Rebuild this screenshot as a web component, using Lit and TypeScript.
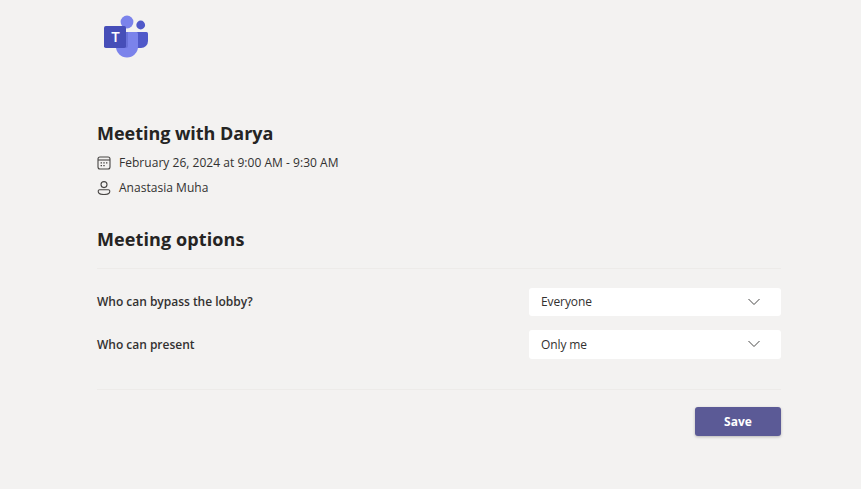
import { LitElement, html, css } from "lit";
import { customElement } from "lit/decorators.js";

const chevron = html`<svg class="chev" width="14" height="8" viewBox="0 0 14 8" fill="none"><path d="M1.5 1 L7 6.5 L12.5 1" stroke="#4a4948" stroke-width="1"/></svg>`;

const teams = html`<svg class="logo" width="46" height="44" viewBox="0 0 46 44">
  <circle cx="38.7" cy="11" r="4.4" fill="#5059c9"/>
  <path d="M30 18h14.5a1.5 1.5 0 0 1 1.5 1.5V27a7 7 0 0 1-7 7H30z" fill="#5059c9"/>
  <circle cx="25" cy="8" r="6.4" fill="#7b83eb"/>
  <path d="M14 18h20.5a1.5 1.5 0 0 1 1.5 1.5V32.500a10.500 10.500 0 0 1-22 0z" fill="#7b83eb"/>
  <path d="M14 18h12v14a2 2 0 0 1-2 2h-9A11 11 0 0 1 14 32.500z" fill="#5a62c9" opacity="0.5"/>
  <rect x="2" y="12" width="22" height="22" rx="1.8" fill="#464eb8"/>
  <text class="t" x="13.400" y="28.200" text-anchor="middle">T</text>
</svg>`;

@customElement("app-root")
export class AppRoot extends LitElement {
  static styles = css`
    :host {
      display: block;
      height: 489px;
      background: #f3f2f1;
      font-family: "Open Sans", "Noto Sans", sans-serif;
      color: #252423;
      overflow: hidden;
    }
    .page {
      display: flex;
      flex-direction: column;
      width: 684px;
      margin-left: 97px;
      padding-top: 14px;
    }
    .logo { display: block; margin-left: 5px; }
    .t { font: 600 15px "Open Sans", sans-serif; fill: #fff; }
    h1, h2 {
      margin: 0;
      font-size: 18px;
      line-height: 24px;
      font-weight: 700;
      color: #252423;
    }
    h1 { margin-top: 63px; letter-spacing: -0.03px; }
    .meta {
      display: flex;
      align-items: center;
      gap: 8px;
      font-size: 12px;
      line-height: 18px;
      color: #323130;
      letter-spacing: 0.03px;
    }
    .meta svg { width: 14px; height: 14px; flex: none; }
    .m1 { margin-top: 9px; }
    .m2 { margin-top: 7px; }
    h2 { margin-top: 30px; letter-spacing: 0.1px; }
    hr {
      border: 0;
      border-top: 1px solid #edebe9;
      margin: 0;
    }
    .h1 { margin-top: 17px; }
    .rows { display: flex; flex-direction: column; gap: 14px; margin-top: 18.5px; }
    .row {
      display: flex;
      justify-content: space-between;
      align-items: center;
    }
    .label { font-size: 12px; font-weight: 600; color: #323130; letter-spacing: -0.02px; }
    .select {
      width: 252px;
      height: 28.5px;
      box-sizing: border-box;
      background: #fff;
      border-radius: 3px;
      display: flex;
      align-items: center;
      justify-content: space-between;
      padding: 0 20px 0 12px;
      font-size: 12px;
      color: #323130;
      letter-spacing: -0.1px;
    }
    .h2 { margin-top: 30.5px; }
    .actions { display: flex; justify-content: flex-end; margin-top: 17px; }
    button {
      width: 86px;
      height: 29px;
      border: 0;
      border-radius: 3px;
      background: #5b5a96;
      color: #fff;
      font: 700 12px "Open Sans", "Noto Sans", sans-serif;
      box-shadow: 0 1px 3px rgba(0,0,0,0.25);
      padding: 0;
    }
  `;

  render() {
    return html`<div class="page">
      ${teams}
      <h1>Meeting with Darya</h1>
      <div class="meta m1">
        <svg viewBox="0 0 14 14" fill="none" stroke="#484644" stroke-width="1.1">
          <rect x="1" y="1" width="12" height="12" rx="2"/>
          <path d="M1 4h12"/>
          <path d="M3.6 6.9h1.4M6.3 6.9h1.4M9 6.9h1.4M3.6 9.6h1.4M6.3 9.6h1.4" stroke-width="1.4"/>
        </svg>
        <span>February 26, 2024 at 9:00 AM - 9:30 AM</span>
      </div>
      <div class="meta m2">
        <svg viewBox="0 0 14 14" fill="none" stroke="#484644" stroke-width="1.1">
          <circle cx="7" cy="3.6" r="3"/>
          <path d="M2.6 8.8h8.8a1.4 1.4 0 0 1 1.4 1.4c0 2-2.6 3.3-5.8 3.3S1.2 12.2 1.2 10.2a1.4 1.4 0 0 1 1.4-1.4z"/>
        </svg>
        <span>Anastasia Muha</span>
      </div>
      <h2>Meeting options</h2>
      <hr class="h1" />
      <div class="rows">
        <div class="row"><span class="label">Who can bypass the lobby?</span><div class="select"><span>Everyone</span>${chevron}</div></div>
        <div class="row"><span class="label">Who can present</span><div class="select"><span>Only me</span>${chevron}</div></div>
      </div>
      <hr class="h2" />
      <div class="actions"><button>Save</button></div>
    </div>`;
  }
}
